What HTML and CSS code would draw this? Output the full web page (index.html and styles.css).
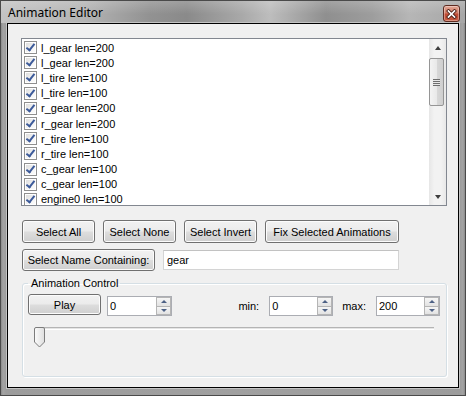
FILE: index.html
```html
<!DOCTYPE html>
<html lang="en">
<head>
  <meta charset="UTF-8"/>
  <meta name="viewport" content="width=device-width,initial-scale=1"/>
  <title>Animation Editor</title>
  <link rel="stylesheet" href="styles.css">
</head>
<body>
  <div class="window">
    <header class="titlebar">
      <span class="title">Animation Editor</span>
      <button class="close" title="Close">
        <svg width="11" height="10" viewBox="0 0 11 10">
          <path d="M2.5 2 L8.5 8 M8.5 2 L2.5 8" stroke="#4a1d14" stroke-width="3.4" stroke-linecap="square"/>
          <path d="M2.5 2 L8.5 8 M8.5 2 L2.5 8" stroke="#fff" stroke-width="1.7" stroke-linecap="square"/>
        </svg>
      </button>
    </header>
    <main class="client">
      <div class="listbox">
        <ul class="items">
          <li><span class="check"></span>l_gear len=200</li>
          <li><span class="check"></span>l_gear len=200</li>
          <li><span class="check"></span>l_tire len=100</li>
          <li><span class="check"></span>l_tire len=100</li>
          <li><span class="check"></span>r_gear len=200</li>
          <li><span class="check"></span>r_gear len=200</li>
          <li><span class="check"></span>r_tire len=100</li>
          <li><span class="check"></span>r_tire len=100</li>
          <li><span class="check"></span>c_gear len=100</li>
          <li><span class="check"></span>c_gear len=100</li>
          <li><span class="check"></span>engine0 len=100</li>
        </ul>
        <div class="vscroll">
          <span class="sbtn"><span class="tri up"></span></span>
          <span class="thumb"><span class="grip"></span></span>
          <span class="sbtn"><span class="tri down"></span></span>
        </div>
      </div>

      <div class="btnrow">
        <button class="btn w73">Select All</button>
        <button class="btn w73">Select None</button>
        <button class="btn w73">Select Invert</button>
        <button class="btn w134">Fix Selected Animations</button>
      </div>

      <div class="btnrow second">
        <button class="btn w133">Select Name Containing:</button>
        <div class="textbox">gear</div>
      </div>

      <fieldset class="group">
        <legend>Animation Control</legend>
        <div class="ctlrow">
          <button class="btn play">Play</button>
          <div class="spin frame-spin"><span class="val">0</span><span class="spinbtns"><span class="sb"><span class="tri sm up"></span></span><span class="sb"><span class="tri sm down"></span></span></span></div>
          <span class="grow"></span>
          <span class="lbl">min:</span>
          <div class="spin"><span class="val">0</span><span class="spinbtns"><span class="sb"><span class="tri sm up"></span></span><span class="sb"><span class="tri sm down"></span></span></span></div>
          <span class="lbl max">max:</span>
          <div class="spin"><span class="val">200</span><span class="spinbtns"><span class="sb"><span class="tri sm up"></span></span><span class="sb"><span class="tri sm down"></span></span></span></div>
        </div>
        <div class="slider">
          <div class="track"></div>
          <svg class="knob" width="11" height="21" viewBox="0 0 11 21">
            <defs>
              <linearGradient id="kg" x1="0" y1="0" x2="1" y2="0">
                <stop offset="0" stop-color="#fbfbfb"/>
                <stop offset="1" stop-color="#dedede"/>
              </linearGradient>
            </defs>
            <path d="M2 0.5 H9 Q10.5 0.5 10.5 2 V15 L5.5 20 L0.5 15 V2 Q0.5 0.5 2 0.5Z" fill="url(#kg)" stroke="#7c7c7c"/>
          </svg>
        </div>
      </fieldset>
    </main>
  </div>
</body>
</html>
```

FILE: styles.css
```css
* { box-sizing: border-box; }
body { margin: 0; background: #fff; font-family: "Liberation Sans", Arial, sans-serif; font-size: 11px; color: #000; }

.window {
  width: 466px; height: 396px;
  padding: 0 6px 7px 6px;
  border: 1px solid #4a4a4a;
  background: linear-gradient(90deg, #8a8a8a 0, #a4a4a4 2px, #9c9c9c 5px, #a0a0a0 50%, #9c9c9c calc(100% - 5px), #a4a4a4 calc(100% - 2px), #8a8a8a 100%);
  display: flex; flex-direction: column;
}
.titlebar {
  height: 22px; margin: 0 -6px;
  display: flex; align-items: flex-start; justify-content: space-between;
  background:
    linear-gradient(180deg, rgba(255,255,255,.18) 0, rgba(255,255,255,0) 60%),
    linear-gradient(90deg, #c3c3c3 0, #b4b4b4 18%, #929292 32%, #8a8a8a 40%, #a9a9a9 52%, #bdbdbd 58%, #8f8f8f 70%, #9d9d9d 80%, #b6b6b6 88%, #a6a6a6 100%);
}
.title {
  font-family: "Noto Sans", "Open Sans", sans-serif; font-size: 12px;
  line-height: 16px; margin: 4px 0 0 7px; color: #000;
}
.close {
  width: 17px; height: 17px; margin: 4px 5px 0 0; padding: 0;
  border: 1px solid #5e2a20; border-radius: 3px;
  background: linear-gradient(180deg, #e3a897 0, #d27a64 45%, #bf4a33 55%, #c85a40 100%);
  box-shadow: inset 0 0 0 1px rgba(255,255,255,.35);
  display: flex; align-items: center; justify-content: center;
}

.client {
  flex: 1;
  background: #f0f0f0;
  border: 1px solid #000;
  box-shadow: 0 0 0 1px #c4c4c4;
  padding: 14px 13px 0 13px;
  display: flex; flex-direction: column;
}

.listbox {
  width: 426px; height: 168px;
  border: 1px solid #828790; background: #fff;
  display: flex; overflow: hidden;
}
.items { flex: 1; margin: 0; padding: 1px 0 0 2px; list-style: none; overflow: hidden; }
.items li { height: 15.2px; display: flex; align-items: center; white-space: nowrap; }
.check {
  position: relative; flex: none;
  width: 13px; height: 13px; margin-right: 4px;
  border: 1px solid #8f8f8f;
  background: linear-gradient(135deg, #dadada 0, #f4f4f4 60%, #fff 100%);
  box-shadow: inset 0 0 0 1px #fff;
}
.check::after {
  content: ""; position: absolute; left: 3px; top: 0;
  width: 3px; height: 7px;
  border: solid #3c5a9a; border-width: 0 2px 2px 0;
  transform: rotate(38deg);
}

.vscroll {
  width: 17px; flex: none;
  background: linear-gradient(90deg, #e6e6e6, #f2f2f2 30%, #f2f2f2 70%, #e8e8e8);
  display: flex; flex-direction: column;
}
.sbtn { height: 17px; display: flex; align-items: center; justify-content: center; }
.tri { width: 0; height: 0; border-left: 3.5px solid transparent; border-right: 3.5px solid transparent; }
.tri.up { border-bottom: 4px solid #3d3d3d; }
.tri.down { border-top: 4px solid #3d3d3d; }
.vscroll .sbtn:last-child { margin-top: auto; }
.thumb {
  height: 48px; margin: 2px 2px 0 0; margin-left: 0;
  border: 1px solid #959595; border-radius: 2px;
  background: linear-gradient(90deg, #f3f3f3 0, #e9e9e9 50%, #d8d8d8 51%, #cfcfcf 100%);
  display: flex; align-items: center; justify-content: center;
}
.grip {
  width: 7px; height: 7px;
  background: repeating-linear-gradient(180deg, #6e6e6e 0, #6e6e6e 1px, #e8e8e8 1px, #e8e8e8 2px);
}

.btnrow { display: flex; gap: 8px; margin: 14px 0 0 1px; align-items: flex-start; }
.btnrow.second { margin-top: 6px; gap: 8px; }
.btn {
  height: 23px; padding: 0;
  font-family: "Liberation Sans", Arial, sans-serif; font-size: 11px; color: #000;
  border: 1px solid #707070; border-radius: 3px;
  background: linear-gradient(180deg, #f2f2f2 0, #ebebeb 48%, #dddddd 52%, #cfcfcf 100%);
  box-shadow: inset 0 0 0 1px #fcfcfc;
}
.w73 { width: 73px; }
.w134 { width: 134px; }
.w133 { width: 133px; height: 22px; }
.textbox {
  width: 236px; height: 20px; margin-top: 1px;
  border: 1px solid #d4d4d4; border-top-color: #c2c2c2;
  background: #fff; padding: 3px 0 0 3px; line-height: 13px;
}

.group {
  margin: 6px 0 0 1px; padding: 4px 6px 0 5px;
  width: 425px; height: 100px; min-width: 0;
  border: 1px solid #d5dfe5; border-radius: 3px;
  box-shadow: inset 1px 1px 0 #fff, 1px 1px 0 #fff;
}
.group legend { padding: 0 2px 0 3px; line-height: 13px; }
.ctlrow { display: flex; align-items: flex-start; }
.play { width: 73px; height: 21px; }
.grow { flex: 1; }
.spin {
  width: 64px; height: 20px; margin-top: 2px;
  border: 1px solid #abadb3; background: #fff;
  display: flex;
}
.frame-spin { width: 65px; margin-left: 6px; }
.val { flex: 1; padding: 3px 0 0 2px; line-height: 13px; }
.spinbtns { width: 15px; display: flex; flex-direction: column; }
.sb {
  flex: 1; display: flex; align-items: center; justify-content: center;
  border: 1px solid #b5b5b5;
  background: linear-gradient(180deg, #f6f6f6, #e2e2e2);
}
.sb + .sb { border-top: none; }
.tri.sm { border-left-width: 3px; border-right-width: 3px; }
.tri.sm.up { border-bottom: 3px solid #4d6185; }
.tri.sm.down { border-top: 3px solid #4d6185; }
.lbl { margin: 6px 10px 0 0; }
.lbl.max { margin-left: 9px; }

.slider { position: relative; height: 28px; margin-top: 11px; }
.track {
  width: 396px; height: 3px; margin: 7px 0 0 10px;
  border-top: 1px solid #b4b4b4; border-bottom: 1px solid #fff;
  background: #e4e4e4;
}
.knob { position: absolute; left: 6px; top: 0; }
```
